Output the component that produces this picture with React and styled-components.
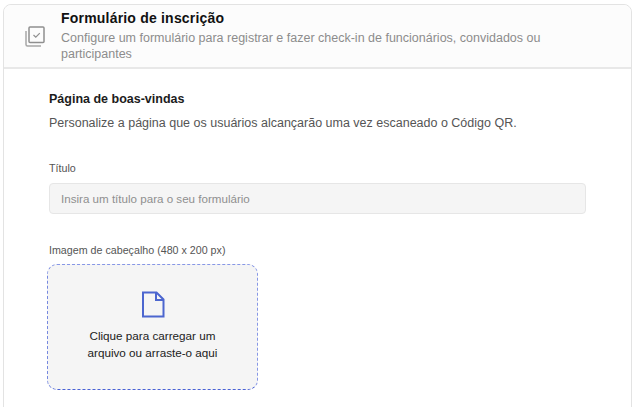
import React from 'react'
import styled, { createGlobalStyle } from 'styled-components'

const GlobalStyle = createGlobalStyle`
  html, body {
    margin: 0;
    padding: 0;
    background: #fff;
    overflow: hidden;
  }
  body {
    font-family: "Liberation Sans", Arial, sans-serif;
  }
`

const Page = styled.div`
  width: 637px;
  height: 407px;
  box-sizing: border-box;
  padding: 4px 5px 0 3px;
  overflow: hidden;
`

const Card = styled.section`
  box-sizing: border-box;
  height: 440px;
  border: 1px solid #e3e3e3;
  border-radius: 8px;
  background: #fff;
`

const Header = styled.header`
  box-sizing: border-box;
  height: 64px;
  display: flex;
  align-items: flex-start;
  padding: 0 75px 0 21px;
  background: #fcfcfc;
  border-bottom: 2px solid #e8e8e8;
  border-radius: 8px 8px 0 0;
`

const HeaderIcon = styled.svg`
  flex: none;
  width: 20px;
  height: 21px;
  margin: 21px 16px 0 0;
`

const HeaderText = styled.div`
  padding-top: 5px;
`

const Title = styled.h1`
  margin: 0 0 3px;
  font-size: 14px;
  line-height: 17px;
  font-weight: 700;
  letter-spacing: 0.2px;
  color: #111;
`

const Description = styled.p`
  margin: 0;
  font-size: 12.5px;
  line-height: 16px;
  color: #8c8c8c;
`

const Body = styled.div`
  padding: 22px 45px 0 45px;
`

const SectionTitle = styled.h2`
  margin: 0 0 8px;
  font-size: 12.5px;
  line-height: 16px;
  font-weight: 700;
  color: #1c1c1c;
`

const SectionText = styled.p`
  margin: 0 0 30px;
  font-size: 12.5px;
  line-height: 16px;
  color: #555;
`

const FieldLabel = styled.label`
  display: block;
  margin-bottom: ${props => props.gap}px;
  font-size: 10.7px;
  line-height: 14px;
  color: #555;
`

const TextInput = styled.input`
  display: block;
  box-sizing: border-box;
  width: 100%;
  height: 31px;
  margin-bottom: 29px;
  padding: 0 11px;
  border: 1px solid #e6e6e6;
  border-radius: 4px;
  background: #f5f5f5;
  font-family: inherit;
  font-size: 11.6px;
  color: #333;
  outline: none;

  &::placeholder {
    color: #8f8f8f;
    opacity: 1;
  }
`

const DropZone = styled.div`
  box-sizing: border-box;
  width: 211px;
  height: 126px;
  margin-left: -2px;
  display: flex;
  flex-direction: column;
  align-items: center;
  padding-top: 26px;
  border: 1px dashed #8797e6;
  border-left-color: #7688e0;
  border-bottom-color: #4a62d6;
  border-radius: 10px;
  background: #f5f5f5;
`

const DropIcon = styled.svg`
  width: 24px;
  height: 27px;
  margin-bottom: 9px;
`

const DropText = styled.div`
  font-size: 11.7px;
  line-height: 17px;
  text-align: center;
  color: #222;
`

export default function App () {
  return (
    <Page>
      <GlobalStyle />
      <Card>
        <Header>
          <HeaderIcon viewBox='0 0 20 21' fill='none'>
            <path d='M1 5v13.5c0 .8.7 1.5 1.5 1.5H16' stroke='#a6a6a6' strokeWidth='1.5' />
            <rect x='4' y='1' width='15' height='15.5' rx='1' stroke='#8f8f8f' strokeWidth='1.5' />
            <path d='M8.5 9l2.3 2.2 4-4' stroke='#8f8f8f' strokeWidth='1.2' />
          </HeaderIcon>
          <HeaderText>
            <Title>Formulário de inscrição</Title>
            <Description>
              Configure um formulário para registrar e fazer check-in de funcionários, convidados ou participantes
            </Description>
          </HeaderText>
        </Header>
        <Body>
          <SectionTitle>Página de boas-vindas</SectionTitle>
          <SectionText>Personalize a página que os usuários alcançarão uma vez escaneado o Código QR.</SectionText>
          <FieldLabel gap={8}>Título</FieldLabel>
          <TextInput placeholder='Insira um título para o seu formulário' />
          <FieldLabel gap={7}>Imagem de cabeçalho (480 x 200 px)</FieldLabel>
          <DropZone>
            <DropIcon viewBox='0 0 24 27' fill='none'>
              <path d='M2 1.5h13.5L22.5 8.5V25.5H2z' stroke='#4c66cf' strokeWidth='2' />
              <path d='M15 1.5V9h7.5' stroke='#4c66cf' strokeWidth='2' />
            </DropIcon>
            <DropText>Clique para carregar um<br />arquivo ou arraste-o aqui</DropText>
          </DropZone>
        </Body>
      </Card>
    </Page>
  )
}
